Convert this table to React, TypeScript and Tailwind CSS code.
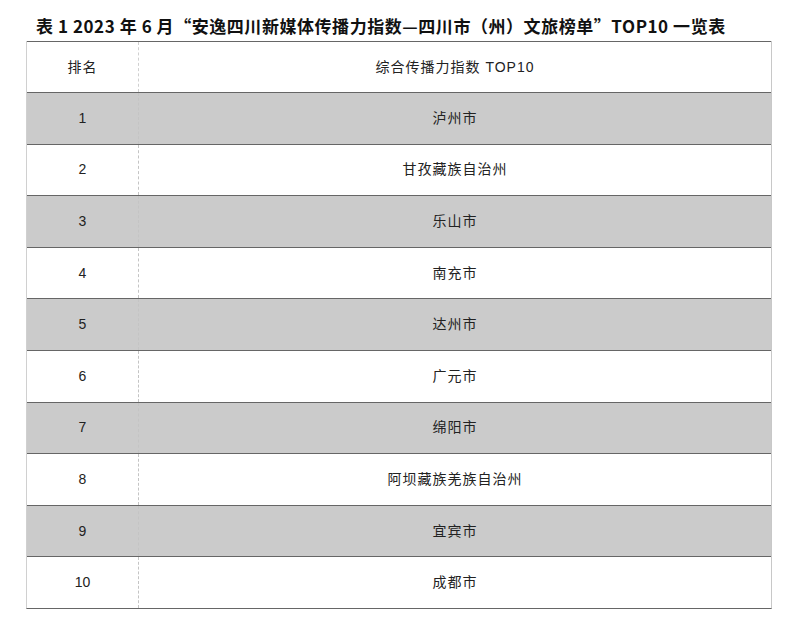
import React from "react";

const rows = [
  "泸州市",
  "甘孜藏族自治州",
  "乐山市",
  "南充市",
  "达州市",
  "广元市",
  "绵阳市",
  "阿坝藏族羌族自治州",
  "宜宾市",
  "成都市",
];

const cjk = { fontFamily: '"Liberation Sans", "Noto Sans CJK SC", sans-serif' };

export default function App() {
  return (
    <div className="w-[800px] h-[633px] bg-white" style={cjk}>
      <div className="pt-[16px] pl-[36px] h-[41px]">
        <h1
          className="text-[17px] leading-[20px] font-bold text-[#111] whitespace-nowrap tracking-[0.55px]"
          style={{ fontFamily: '"Noto Sans CJK SC", sans-serif' }}
        >
          表 1 2023 年 6 月“安逸四川新媒体传播力指数—四川市（州）文旅榜单”TOP10 一览表
        </h1>
      </div>
      <div className="ml-[26px] w-[746px] border-b border-[#666] border-l border-r border-l-[#d0d0d0] border-r-[#c8c8c8]">
        <div className="grid grid-cols-[112px_1fr] h-[51px] border-t border-[#666] text-[#222]">
          <div className="flex items-center justify-center border-r border-dashed border-[#d0d0d0] text-[14px] tracking-[1px]">
            排名
          </div>
          <div className="flex items-center justify-center text-[14px] tracking-[1px]">
            综合传播力指数 TOP10
          </div>
        </div>
        {rows.map((name, i) => (
          <div
            key={i}
            className={
              "grid grid-cols-[112px_1fr] h-[51.6px] border-t border-[#666] text-[#222] " +
              (i % 2 === 0 ? "bg-[#cbcbcb]" : "bg-white")
            }
          >
            <div className="flex items-center justify-center border-r border-dashed border-[#c4c4c4] text-[14px]">
              {i + 1}
            </div>
            <div className="flex items-center justify-center text-[14px] tracking-[1px]">
              {name}
            </div>
          </div>
        ))}
      </div>
    </div>
  );
}
